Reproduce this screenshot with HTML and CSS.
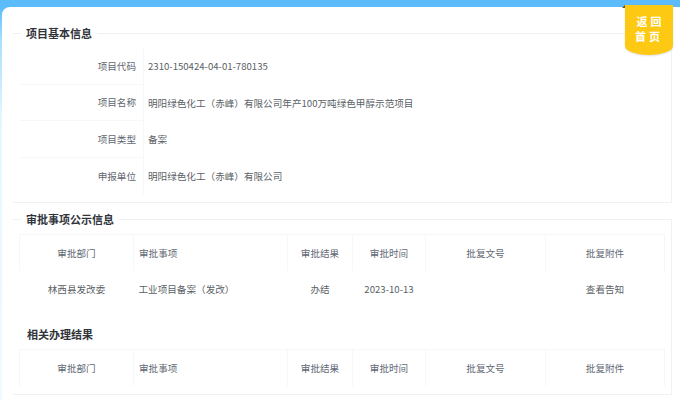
FILE: index.html
```html
<!DOCTYPE html>
<html lang="zh-CN">
<head>
  <meta charset="UTF-8" />
  <meta name="viewport" content="width=device-width, initial-scale=1.0" />
  <title>项目详情</title>
  <link rel="stylesheet" href="styles.css">
</head>
<body>
  <div class="card">
    <fieldset class="panel">
      <legend>项目基本信息</legend>
      <div class="info-row">
        <div class="info-label">项目代码</div>
        <div class="info-value">2310-150424-04-01-780135</div>
      </div>
      <div class="info-row">
        <div class="info-label">项目名称</div>
        <div class="info-value">明阳绿色化工（赤峰）有限公司年产100万吨绿色甲醇示范项目</div>
      </div>
      <div class="info-row">
        <div class="info-label">项目类型</div>
        <div class="info-value">备案</div>
      </div>
      <div class="info-row">
        <div class="info-label">申报单位</div>
        <div class="info-value">明阳绿色化工（赤峰）有限公司</div>
      </div>
    </fieldset>

    <fieldset class="panel panel-open">
      <legend>审批事项公示信息</legend>
      <table class="grid">
        <colgroup>
          <col class="col-dept"><col class="col-item"><col class="col-result">
          <col class="col-time"><col class="col-no"><col class="col-file">
        </colgroup>
        <thead>
          <tr>
            <th>审批部门</th>
            <th class="cell-left">审批事项</th>
            <th>审批结果</th>
            <th>审批时间</th>
            <th>批复文号</th>
            <th>批复附件</th>
          </tr>
        </thead>
        <tbody>
          <tr>
            <td>林西县发改委</td>
            <td class="cell-left">工业项目备案（发改）</td>
            <td>办结</td>
            <td>2023-10-13</td>
            <td></td>
            <td>查看告知</td>
          </tr>
        </tbody>
      </table>
    </fieldset>

    <div class="panel panel-plain">
      <h3 class="panel-title">相关办理结果</h3>
      <table class="grid">
        <colgroup>
          <col class="col-dept"><col class="col-item"><col class="col-result">
          <col class="col-time"><col class="col-no"><col class="col-file">
        </colgroup>
        <thead>
          <tr>
            <th>审批部门</th>
            <th class="cell-left">审批事项</th>
            <th>审批结果</th>
            <th>审批时间</th>
            <th>批复文号</th>
            <th>批复附件</th>
          </tr>
        </thead>
      </table>
    </div>
  </div>

  <a class="back-home" href="#">返回<br>首页</a>
</body>
</html>
```

FILE: styles.css
```css
body {
  margin: 0;
  font-family: "Noto Sans CJK SC", "Noto Sans", sans-serif;
  font-size: 9.6px;
  color: #5f6670;
  background: linear-gradient(to bottom, #5cbcfb 0, #5cbcfb 7px, #a9defd 40px, #e4f7ff 120px, #f0fbff 100%);
  min-height: 100vh;
}

.card {
  margin: 7px 0 0 2px;
  padding: 18px 8px 0 11px;
  background: #fff;
  border-top-left-radius: 8px;
  min-height: 375px;
}

.panel {
  margin: 0;
  padding: 7px 6px 8px 6px;
  min-width: 0;
  border: 1px solid #eef2f5;
  border-left: none;
}

.panel legend {
  margin-left: 2px;
  padding: 0 5px;
  font-size: 11px;
  line-height: 16px;
  font-weight: 700;
  color: #30343a;
}

.panel-open {
  margin-top: 8px;
  border-bottom-color: transparent;
}

.panel-plain {
  margin-top: -1px;
  padding-top: 11px;
  border-top: none;
}

.panel-title {
  margin: 0 0 7px 8px;
  font-size: 11px;
  line-height: 16px;
  font-weight: 700;
  color: #30343a;
}

.info-row {
  display: flex;
  height: 36.6px;
  align-items: stretch;
}

.info-label {
  width: 117px;
  padding-right: 7px;
  display: flex;
  align-items: center;
  justify-content: flex-end;
  border-right: 1px solid #f4f8fa;
  border-bottom: 1px solid #f6f9fb;
}

.info-row:last-child .info-label {
  border-bottom: none;
}

.info-value {
  padding-left: 4px;
  display: flex;
  align-items: center;
  color: #5a5f66;
}

.grid {
  width: 645px;
  table-layout: fixed;
  border-collapse: collapse;
}

.grid th,
.grid td {
  height: 36px;
  padding: 0;
  text-align: center;
  font-weight: 400;
}

.grid th {
  border: 1px solid #f4f8fa;
  border-bottom: none;
  color: #5f6874;
}

.grid td {
  color: #5a5f66;
}

.grid .cell-left {
  text-align: left;
  padding-left: 5px;
}

.col-dept { width: 114px; }
.col-item { width: 154px; }
.col-result { width: 65px; }
.col-time { width: 73px; }
.col-no { width: 120px; }
.col-file { width: 119px; }

.back-home {
  position: absolute;
  top: 5px;
  left: 625px;
  width: 48px;
  height: 50px;
  box-sizing: border-box;
  padding-top: 9px;
  background: #fec913;
  border-radius: 0 0 24px 24px / 0 0 9px 9px;
  box-shadow: 0 1px 2px rgba(0, 0, 0, 0.12);
  color: #fff;
  font-size: 11px;
  font-weight: 700;
  line-height: 15px;
  letter-spacing: 3px;
  text-indent: 3px;
  text-align: center;
  text-decoration: none;
}

.back-home::before {
  content: "";
  position: absolute;
  top: 0;
  left: -3px;
  border-bottom: 3px solid #6b5a1a;
  border-left: 3px solid transparent;
}
```
